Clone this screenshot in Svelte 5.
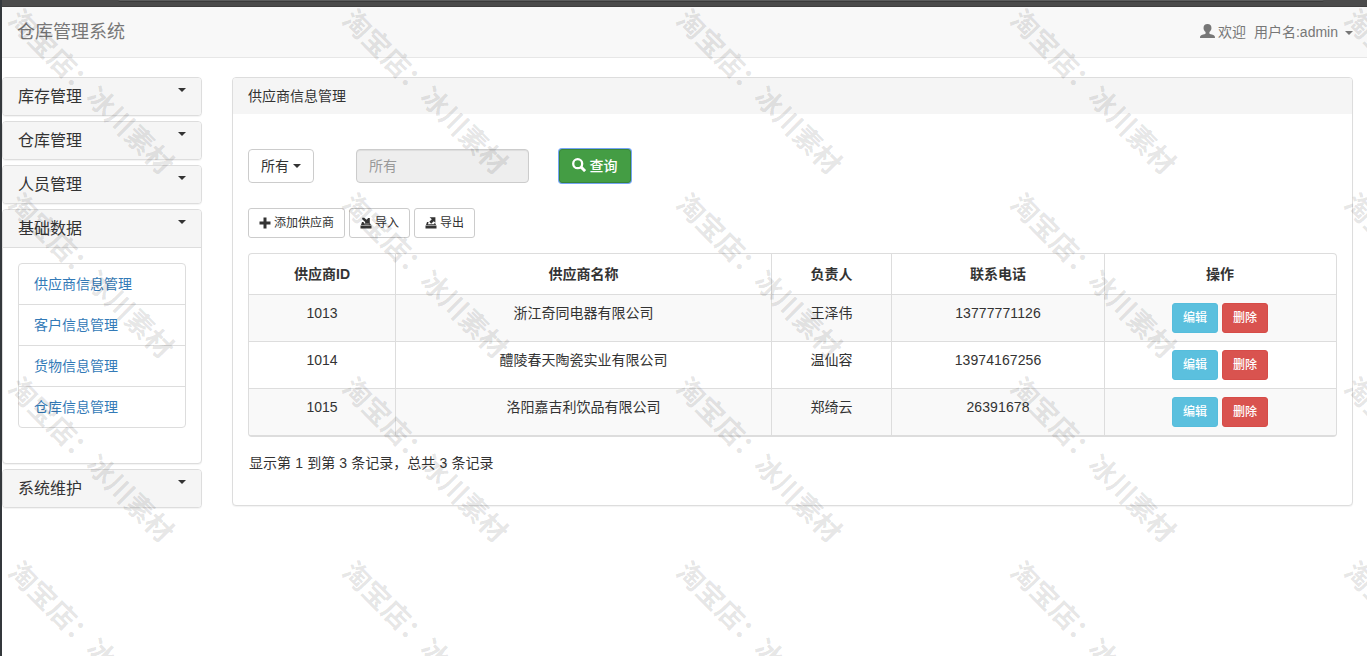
<script lang="ts">
	const menus = [
		{ title: '库存管理', items: [] },
		{ title: '仓库管理', items: [] },
		{ title: '人员管理', items: [] },
		{
			title: '基础数据',
			items: ['供应商信息管理', '客户信息管理', '货物信息管理', '仓库信息管理']
		},
		{ title: '系统维护', items: [] }
	];

	const suppliers = [
		{ id: 1013, name: '浙江奇同电器有限公司', contact: '王泽伟', phone: '13777771126' },
		{ id: 1014, name: '醴陵春天陶瓷实业有限公司', contact: '温仙容', phone: '13974167256' },
		{ id: 1015, name: '洛阳嘉吉利饮品有限公司', contact: '郑绮云', phone: '26391678' }
	];

	const marks: { x: number; y: number }[] = [];
	for (let row = 0; row < 4; row++) {
		for (let col = 0; col < 5; col++) {
			marks.push({ x: 23.5 + col * 334, y: 24 + row * 184 });
		}
	}
</script>

<div class="window">
	<div class="chrome"><div class="tab"></div></div>

	<nav class="navbar">
		<span class="brand">仓库管理系统</span>
		<a class="user" href="#user">
			<svg class="icon-user" viewBox="0 0 14 14" width="15" height="14" preserveAspectRatio="none">
				<path
					d="M7 0C4.600 0 3.300 1.500 3.300 3.900c0 1.700.8 3.200 1.900 4.100v1.400C5 10 3.300 10.200 1.600 11 .500 11.500 0 12.200 0 14h14c0-1.800-.5-2.500-1.600-3C10.700 10.200 9 10 8.800 9.400V8c1.100-.9 1.900-2.400 1.900-4.100C10.700 1.500 9.400 0 7 0z"
				/>
			</svg>
			<span class="welcome">欢迎</span>
			<span>用户名:admin</span>
			<b class="caret"></b>
		</a>
	</nav>

	<div class="content">
		<aside class="sidebar">
			{#each menus as menu}
				<div class="panel">
					<div class="menu-heading">
						<span>{menu.title}</span>
						<b class="caret"></b>
					</div>
					{#if menu.items.length}
						<div class="menu-body">
							<ul class="list-group">
								{#each menu.items as item}
									<li><a href="#menu">{item}</a></li>
								{/each}
							</ul>
						</div>
					{/if}
				</div>
			{/each}
		</aside>

		<main class="panel main">
			<div class="panel-heading">供应商信息管理</div>
			<div class="panel-body">
				<div class="search">
					<button class="btn">所有<b class="caret"></b></button>
					<input class="form-control" type="text" placeholder="所有" disabled />
					<button class="btn btn-success">
						<svg viewBox="0 0 14 14" width="14" height="14">
							<circle cx="5.700" cy="5.700" r="4.500" fill="none" stroke="currentColor" stroke-width="2.300" />
							<path d="M8.900 8.900l4.200 4.200" stroke="currentColor" stroke-width="2.900" />
						</svg>
						<span>查询</span>
					</button>
				</div>

				<div class="toolbar">
					<button class="btn btn-sm">
						<svg viewBox="0 0 12 12" width="12" height="12">
							<path d="M4.500.500h3v4h4v3h-4v4h-3v-4h-4v-3h4z" />
						</svg>
						<span>添加供应商</span>
					</button>
					<button class="btn btn-sm">
						<svg viewBox="0 0 12 12" width="12" height="12">
							<path d="M.500 8.500h11v3H.500zM2 5h1.500l1 2.200h5L9.300 6.600H10L11 8H1zM2.200.800h2l2.400 2L8.200 1h1.600v5.700H4.200L5.400 5.200 2.200 2.200z" />
						</svg>
						<span>导入</span>
					</button>
					<button class="btn btn-sm">
						<svg viewBox="0 0 12 12" width="12" height="12">
							<path d="M.500 8.500h11v3H.500zM2 5h1.600l-.6 2.200h6.400L9 6.200h1.300L11 8H1zM4.600.300h5.800v5.500L8.700 4.200 6.200 6.700 4.300 4.800l2.500-2.500z" />
						</svg>
						<span>导出</span>
					</button>
				</div>

				<div class="table-box">
					<table>
						<colgroup>
							<col class="col-id" />
							<col class="col-name" />
							<col class="col-contact" />
							<col class="col-phone" />
							<col />
						</colgroup>
						<thead>
							<tr>
								<th>供应商ID</th>
								<th>供应商名称</th>
								<th>负责人</th>
								<th>联系电话</th>
								<th>操作</th>
							</tr>
						</thead>
						<tbody>
							{#each suppliers as supplier}
								<tr>
									<td>{supplier.id}</td>
									<td>{supplier.name}</td>
									<td>{supplier.contact}</td>
									<td class="phone">{supplier.phone}</td>
									<td>
										<div class="actions">
											<button class="btn btn-sm btn-info">编辑</button>
											<button class="btn btn-sm btn-danger">删除</button>
										</div>
									</td>
								</tr>
							{/each}
						</tbody>
					</table>
				</div>
				<div class="pagination">显示第 1 到第 3 条记录，总共 3 条记录</div>
			</div>
		</main>
	</div>

	<svg class="watermark" width="1367" height="656">
		{#each marks as mark}
			<text transform="translate({mark.x} {mark.y}) rotate(45)" x="-13.700" y="10">淘宝店：冰川素材</text>
		{/each}
	</svg>
</div>

<style>
	:global(body) {
		margin: 0;
		overflow: hidden;
	}

	.window {
		position: relative;
		box-sizing: border-box;
		width: 1367px;
		height: 656px;
		overflow: hidden;
		border-left: 2px solid #34383c;
		background: #fff;
		color: #333;
		font: 14px/20px 'Liberation Sans', 'Noto Sans CJK SC', sans-serif;
	}

	.window * {
		box-sizing: border-box;
	}

	a {
		color: #337ab7;
		text-decoration: none;
	}

	svg {
		fill: currentColor;
		flex: none;
	}

	.chrome {
		height: 7px;
		background: #4b4b4b;
		border-bottom: 1px solid #403f3f;
	}

	.tab {
		width: 1206px;
		height: 2px;
		margin-left: 116px;
		background: #5d5e5e;
		border-bottom: 1px solid #3c3c3c;
		border-radius: 0 0 3px 3px;
	}

	.navbar {
		display: flex;
		justify-content: space-between;
		height: 51px;
		padding: 0 14px 0 15px;
		background: #f8f8f8;
		border-bottom: 1px solid #e7e7e7;
		color: #777;
	}

	.brand {
		font-size: 18px;
		line-height: 50px;
	}

	.user {
		display: flex;
		align-items: center;
		color: #777;
	}

	.icon-user {
		margin: -2px 3px 0 0;
	}

	.welcome {
		margin-right: 8px;
	}

	.caret {
		width: 0;
		height: 0;
		border-top: 4px solid;
		border-left: 4px solid transparent;
		border-right: 4px solid transparent;
	}

	.user .caret {
		margin: 2px 0 0 7px;
	}

	.content {
		display: flex;
		align-items: flex-start;
		gap: 30px;
		padding-top: 19px;
	}

	.sidebar {
		display: flex;
		flex-direction: column;
		gap: 5px;
		width: 200px;
	}

	.panel {
		border: 1px solid #ddd;
		border-radius: 4px;
		background: #fff;
		box-shadow: 0 1px 1px rgba(0, 0, 0, 0.05);
		overflow: hidden;
	}

	.menu-heading {
		display: flex;
		justify-content: space-between;
		height: 37px;
		padding: 0 15px;
		background: #f5f5f5;
		font-size: 16px;
		line-height: 37px;
	}

	.menu-heading .caret {
		margin-top: 10px;
	}

	.menu-body {
		height: 216px;
		padding: 15px;
		border-top: 1px solid #ddd;
	}

	.list-group {
		margin: 0;
		padding: 0;
		list-style: none;
		border: 1px solid #ddd;
		border-radius: 4px;
	}

	.list-group li {
		height: 41px;
		padding: 10px 15px;
		border-bottom: 1px solid #ddd;
	}

	.list-group li:last-child {
		height: 40px;
		border-bottom: 0;
	}

	.main {
		width: 1121px;
		height: 429px;
	}

	.panel-heading {
		height: 36px;
		padding: 8px 15px;
		background: #f5f5f5;
	}

	.panel-body {
		padding: 35px 15px 0;
	}

	.search {
		display: flex;
		align-items: center;
	}

	.btn {
		display: flex;
		align-items: center;
		justify-content: center;
		gap: 4px;
		height: 34px;
		padding: 0 12px;
		border: 1px solid #ccc;
		border-radius: 4px;
		background: #fff;
		color: #333;
		font: inherit;
		white-space: nowrap;
	}

	.form-control {
		width: 173px;
		height: 34px;
		margin: 0 30px 0 42px;
		padding: 6px 12px;
		border: 1px solid #ccc;
		border-radius: 4px;
		background: #eee;
		box-shadow: inset 0 1px 1px rgba(0, 0, 0, 0.075);
		font: inherit;
	}

	.form-control::placeholder {
		color: #999;
		opacity: 1;
	}

	.btn-success {
		width: 72px;
		padding: 0 13px 0 12px;
		border-color: #398439;
		border-radius: 3px;
		background: #449d44;
		box-shadow: 0 0 0 1px #74a5f5;
		color: #fff;
		font-weight: 500;
	}

	.btn-success svg {
		margin-top: -3px;
	}

	.toolbar {
		display: flex;
		gap: 4px;
		margin-top: 25px;
	}

	.btn-sm {
		height: 30px;
		padding: 0 10px;
		border-radius: 3px;
		font-size: 12px;
	}

	.toolbar .btn-sm {
		gap: 3px;
	}

	.table-box {
		width: 1089px;
		height: 184px;
		margin-top: 15px;
		border: 1px solid #ddd;
		border-bottom-width: 2px;
		border-radius: 4px;
		overflow: hidden;
	}

	table {
		width: 1087px;
		border-collapse: separate;
		border-spacing: 0;
		table-layout: fixed;
	}

	.col-id {
		width: 147px;
	}

	.col-name {
		width: 376px;
	}

	.col-contact {
		width: 120px;
	}

	.col-phone {
		width: 213px;
	}

	th,
	td {
		padding: 8px;
		border-right: 1px solid #ddd;
		border-bottom: 1px solid #ddd;
		text-align: center;
		vertical-align: top;
	}

	th {
		height: 41px;
		padding-top: 10px;
	}

	td {
		height: 47px;
	}

	th:last-child,
	td:last-child {
		padding-right: 9px;
		border-right: 0;
	}

	tbody tr:nth-child(odd) {
		background: #f9f9f9;
	}

	.phone {
		letter-spacing: 0.1px;
	}

	.actions {
		display: flex;
		justify-content: center;
		gap: 4px;
	}

	.actions .btn {
		width: 46px;
		padding: 0;
		font-weight: 500;
	}

	.btn-info {
		border-color: #56bddc;
		background: #5bc0de;
		color: #fff;
	}

	.btn-danger {
		border-color: #d64c48;
		background: #d9534f;
		color: #fff;
	}

	.pagination {
		margin: 16px 0 0 1px;
		word-spacing: 0.3px;
	}

	.watermark {
		position: absolute;
		top: 0;
		left: -2px;
		pointer-events: none;
		fill: rgba(0, 0, 0, 0.11);
		font-family: 'Noto Sans CJK SC', sans-serif;
		font-size: 27.4px;
		font-weight: 700;
	}
</style>
